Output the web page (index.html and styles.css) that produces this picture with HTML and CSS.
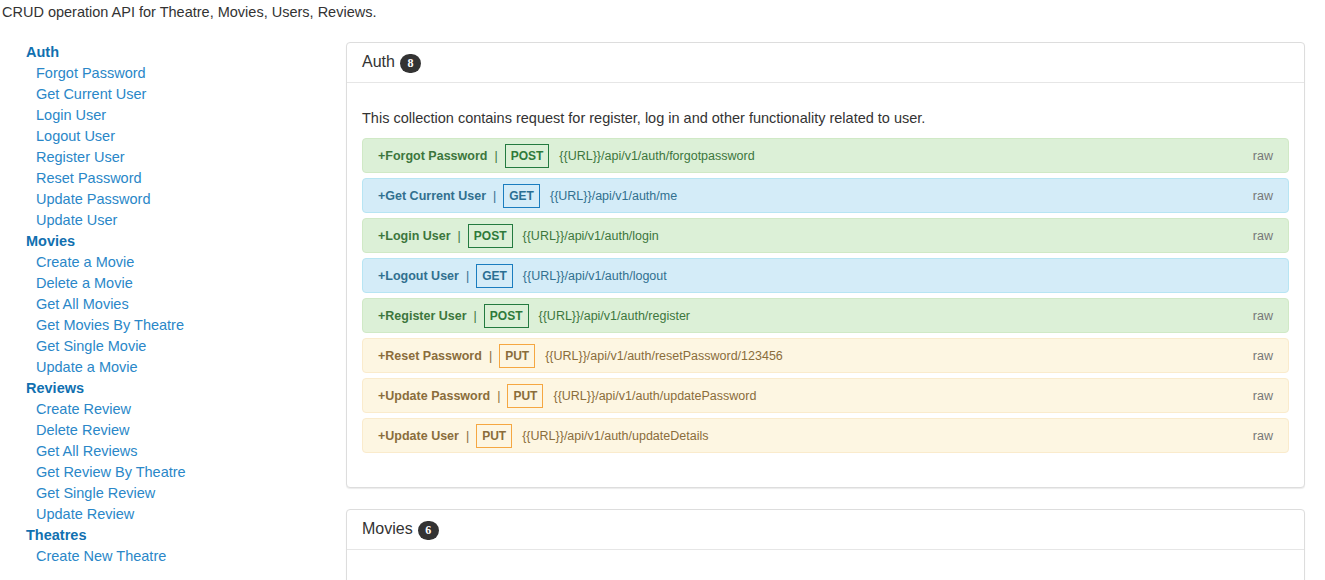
FILE: index.html
```html
<!DOCTYPE html>
<html>
<head>
<meta charset="utf-8">
<title>API Docs</title>
<link rel="stylesheet" href="styles.css">
</head>
<body>
<p class="intro">CRUD operation API for Theatre, Movies, Users, Reviews.</p>
<div class="layout">
  <nav class="sidebar">
    <a class="nav-group">Auth</a>
    <a class="nav-item">Forgot Password</a>
    <a class="nav-item">Get Current User</a>
    <a class="nav-item">Login User</a>
    <a class="nav-item">Logout User</a>
    <a class="nav-item">Register User</a>
    <a class="nav-item">Reset Password</a>
    <a class="nav-item">Update Password</a>
    <a class="nav-item">Update User</a>
    <a class="nav-group">Movies</a>
    <a class="nav-item">Create a Movie</a>
    <a class="nav-item">Delete a Movie</a>
    <a class="nav-item">Get All Movies</a>
    <a class="nav-item">Get Movies By Theatre</a>
    <a class="nav-item">Get Single Movie</a>
    <a class="nav-item">Update a Movie</a>
    <a class="nav-group">Reviews</a>
    <a class="nav-item">Create Review</a>
    <a class="nav-item">Delete Review</a>
    <a class="nav-item">Get All Reviews</a>
    <a class="nav-item">Get Review By Theatre</a>
    <a class="nav-item">Get Single Review</a>
    <a class="nav-item">Update Review</a>
    <a class="nav-group">Theatres</a>
    <a class="nav-item">Create New Theatre</a>
  </nav>
  <main class="content">
    <section class="panel">
      <div class="panel-heading">Auth <span class="count">8</span></div>
      <div class="panel-body">
        <p class="desc">This collection contains request for register, log in and other functionality related to user.</p>
        <div class="req req-post"><span class="req-name">+Forgot Password</span><span class="sep">|</span><span class="method">POST</span><span class="url">{{URL}}/api/v1/auth/forgotpassword</span><span class="raw">raw</span></div>
        <div class="req req-get"><span class="req-name">+Get Current User</span><span class="sep">|</span><span class="method">GET</span><span class="url">{{URL}}/api/v1/auth/me</span><span class="raw">raw</span></div>
        <div class="req req-post"><span class="req-name">+Login User</span><span class="sep">|</span><span class="method">POST</span><span class="url">{{URL}}/api/v1/auth/login</span><span class="raw">raw</span></div>
        <div class="req req-get"><span class="req-name">+Logout User</span><span class="sep">|</span><span class="method">GET</span><span class="url">{{URL}}/api/v1/auth/logout</span></div>
        <div class="req req-post"><span class="req-name">+Register User</span><span class="sep">|</span><span class="method">POST</span><span class="url">{{URL}}/api/v1/auth/register</span><span class="raw">raw</span></div>
        <div class="req req-put"><span class="req-name">+Reset Password</span><span class="sep">|</span><span class="method">PUT</span><span class="url">{{URL}}/api/v1/auth/resetPassword/123456</span><span class="raw">raw</span></div>
        <div class="req req-put"><span class="req-name">+Update Password</span><span class="sep">|</span><span class="method">PUT</span><span class="url">{{URL}}/api/v1/auth/updatePassword</span><span class="raw">raw</span></div>
        <div class="req req-put"><span class="req-name">+Update User</span><span class="sep">|</span><span class="method">PUT</span><span class="url">{{URL}}/api/v1/auth/updateDetails</span><span class="raw">raw</span></div>
      </div>
    </section>
    <section class="panel panel-last">
      <div class="panel-heading">Movies <span class="count">6</span></div>
      <div class="panel-body panel-body-short"></div>
    </section>
  </main>
</div>
</body>
</html>
```

FILE: styles.css
```css
* { box-sizing: border-box; }

html, body {
  margin: 0;
  padding: 0;
  background: #fff;
}

body {
  font-family: "Liberation Sans", Arial, sans-serif;
  font-size: 14.5px;
  line-height: 20px;
  color: #333;
}

.intro {
  margin: 0;
  padding: 2px 0 0 2px;
  line-height: 20px;
}

.layout {
  display: flex;
  align-items: flex-start;
  margin-top: 20px;
  padding-left: 26px;
  padding-right: 20px;
}

.sidebar {
  width: 320px;
  flex: none;
  display: flex;
  flex-direction: column;
  line-height: 21px;
}

.nav-group {
  font-weight: bold;
  color: #1170b0;
}

.nav-item {
  padding-left: 10px;
  color: #2a87c8;
}

.content {
  flex: 1;
  min-width: 0;
}

.panel {
  border: 1px solid #ddd;
  border-radius: 4px;
  background: #fff;
  box-shadow: 0 1px 1px rgba(0, 0, 0, 0.08);
  margin-bottom: 21px;
}

.panel-heading {
  display: flex;
  align-items: center;
  height: 40px;
  padding: 0 15px 2px;
  border-bottom: 1px solid #e6e6e6;
  font-size: 16px;
  color: #333;
}

.count {
  display: inline-flex;
  align-items: center;
  justify-content: center;
  width: 21px;
  height: 19px;
  margin-left: 5px;
  margin-top: 3px;
  border-radius: 10px;
  background: #333;
  color: #fff;
  font-family: "Liberation Serif", "Times New Roman", serif;
  font-weight: bold;
  font-size: 12px;
  line-height: 1;
}

.panel-body {
  padding: 25px 15px 29px;
}

.panel-body-short {
  height: 60px;
  padding: 0;
}

.desc {
  margin: 0 0 10px;
}

.req {
  display: flex;
  align-items: center;
  height: 35px;
  margin-bottom: 5px;
  padding: 0 15px;
  border: 1px solid transparent;
  border-radius: 4px;
  font-size: 12.5px;
}

.req-name {
  font-weight: bold;
}

.sep {
  margin: 0 7px;
}

.method {
  display: inline-flex;
  align-items: center;
  height: 24px;
  padding: 0 5px;
  border: 1px solid;
  font-size: 12px;
  font-weight: bold;
  margin-right: 10px;
}

.raw {
  margin-left: auto;
  color: #777;
}

.req-post {
  background: #dcf0d7;
  border-color: #d0e9c6;
  color: #3c763d;
}
.req-post .method {
  border-color: #237a3f;
  color: #2e7a3b;
}

.req-get {
  background: #d4ecf8;
  border-color: #b7e5f3;
  color: #31708f;
}
.req-get .method {
  border-color: #1a7dbf;
  color: #2a6f93;
}

.req-put {
  background: #fdf6e2;
  border-color: #faebcc;
  color: #8a6d3b;
}
.req-put .method {
  border-color: #f5a742;
  color: #8a6d3b;
}
```
